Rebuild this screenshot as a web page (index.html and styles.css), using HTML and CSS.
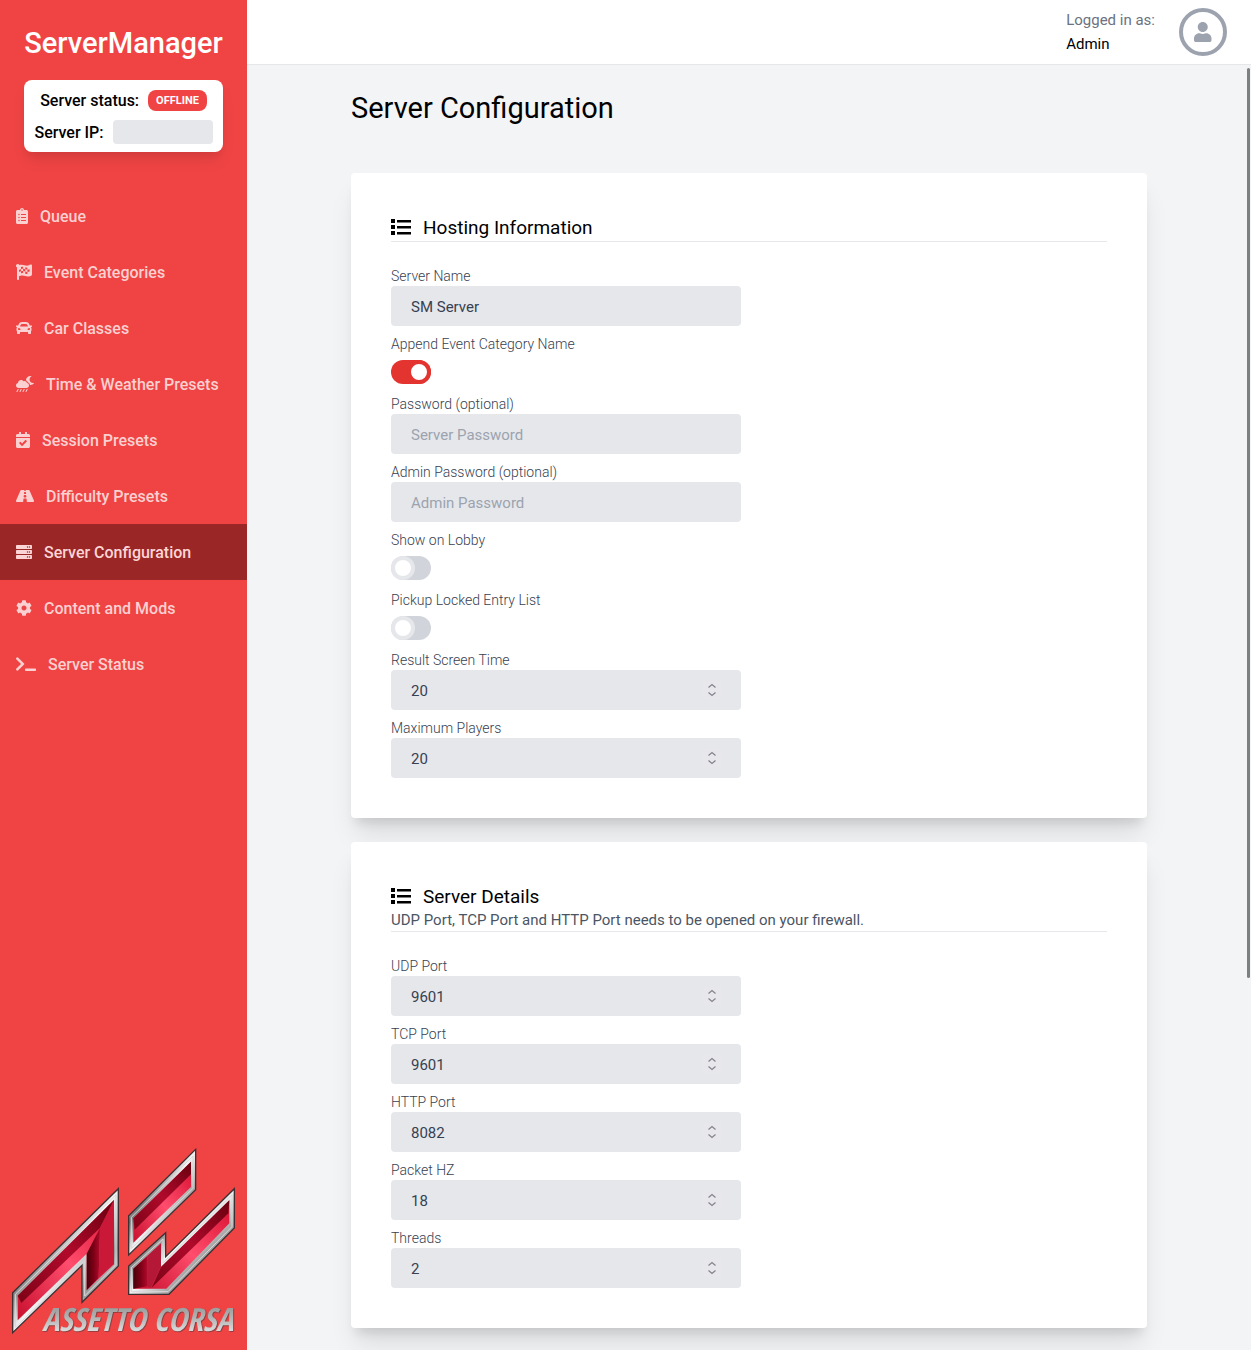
FILE: index.html
```html
<!DOCTYPE html>
<html lang="en">
<head>
<meta charset="utf-8">
<title>Server Configuration - ServerManager</title>
<meta name="viewport" content="width=device-width, initial-scale=1">
<link rel="stylesheet" href="styles.css">
</head>
<body>
<div class="app">
  <aside class="sidebar">
    <div class="brand">
      <div class="brand-name">ServerManager</div>
      <div class="status-card">
        <div class="status-row"><span class="status-label">Server status:</span><span class="badge">OFFLINE</span></div>
        <div class="status-row"><span class="status-label">Server IP:</span><span class="ip-placeholder"></span></div>
      </div>
    </div>
    <nav class="nav">
      <a class="nav-link" href="#"><svg class="icon" viewBox="0 0 384 512"><path d="M336 64h-80c0-35.300-28.700-64-64-64s-64 28.700-64 64H48C21.500 64 0 85.500 0 112v352c0 26.500 21.500 48 48 48h288c26.500 0 48-21.500 48-48V112c0-26.500-21.500-48-48-48zM96 424c-13.300 0-24-10.700-24-24s10.700-24 24-24 24 10.700 24 24-10.700 24-24 24zm0-96c-13.300 0-24-10.700-24-24s10.700-24 24-24 24 10.700 24 24-10.700 24-24 24zm0-96c-13.300 0-24-10.700-24-24s10.700-24 24-24 24 10.700 24 24-10.700 24-24 24zm96-192c13.300 0 24 10.700 24 24s-10.700 24-24 24-24-10.700-24-24 10.700-24 24-24zm128 368c0 4.400-3.600 8-8 8H168c-4.400 0-8-3.600-8-8v-16c0-4.400 3.600-8 8-8h144c4.400 0 8 3.600 8 8v16zm0-96c0 4.400-3.600 8-8 8H168c-4.400 0-8-3.600-8-8v-16c0-4.400 3.600-8 8-8h144c4.400 0 8 3.600 8 8v16zm0-96c0 4.400-3.600 8-8 8H168c-4.400 0-8-3.600-8-8v-16c0-4.400 3.600-8 8-8h144c4.400 0 8 3.600 8 8v16z"/></svg><span>Queue</span></a>
      <a class="nav-link" href="#"><svg class="icon" viewBox="0 0 512 512"><path fill-rule="evenodd" d="M112 56a56 56 0 1 0-80 50v382c0 13 11 24 24 24h16c13 0 24-11 24-24v-94c28-13 60-26 110-26 61 0 112 32 175 32 47 0 86-15 116-35 9-6 15-17 15-28V49c0-24-25-40-46-30-34 16-75 33-115 33-57 0-104-32-174-32-26 0-48 5-69 12 3 8 4 16 4 24zM160 96c24-8 44-12 68-11v69c-24-1-46 3-68 10zM296 101c24 8 44 14 68 15v68c-24 0-46-6-68-13zM228 154c24 2 46 10 68 17v70c-22-8-44-15-68-17zM96 188c22-9 42-18 64-24v70c-22 6-42 14-64 24zM364 184c26 0 48-7 72-16v69c-22 9-46 16-72 15zM160 234c24-7 44-11 68-10v68c-24-1-46 4-68 11zM296 241c24 7 46 12 68 11v69c-24 0-46-6-68-13z"/></svg><span>Event Categories</span></a>
      <a class="nav-link" href="#"><svg class="icon" viewBox="0 0 512 512"><path d="M499.990 176h-59.870l-16.640-41.600C406.380 91.630 365.570 64 319.500 64h-127c-46.060 0-86.880 27.630-103.990 70.400L71.870 176H12.010C4.200 176-1.530 183.340.370 190.910l6 24C7.700 220.250 12.500 224 18.010 224h20.070C24.650 235.730 16 252.780 16 272v48c0 16.120 6.160 30.670 16 41.930V416c0 17.670 14.330 32 32 32h32c17.670 0 32-14.330 32-32v-32h256v32c0 17.670 14.330 32 32 32h32c17.670 0 32-14.330 32-32v-54.070c9.840-11.250 16-25.800 16-41.930v-48c0-19.220-8.650-36.270-22.070-48H494c5.510 0 10.310-3.750 11.640-9.090l6-24c1.890-7.570-3.840-14.910-11.650-14.910zm-352.060-17.830c7.290-18.220 24.940-30.170 44.570-30.170h127c19.630 0 37.280 11.950 44.570 30.170L384 208H128l19.930-49.830zM96 319.800c-19.200 0-32-12.760-32-31.900S76.800 256 96 256s48 28.710 48 47.850-28.800 15.950-48 15.950zm320 0c-19.200 0-48 3.190-48-15.950S396.800 256 416 256s32 12.760 32 31.900-12.800 31.900-32 31.900z"/></svg><span>Car Classes</span></a>
      <a class="nav-link" href="#"><svg class="icon" viewBox="0 0 576 512"><path d="M350.500 225.500c-6.900-37.200-39.300-65.500-78.500-65.500-12.300 0-23.900 3-34.300 8-17.400-24.100-45.600-40-77.700-40-53 0-96 43-96 96 0 .5.200 1.100.2 1.600C27.600 232.900 0 265.200 0 304c0 44.200 35.800 80 80 80h256c44.200 0 80-35.800 80-80 0-39.200-28.200-71.700-65.500-78.500zm217.400-1.700c-70.400 13.300-135-40.300-135-110.800 0-40.600 21.900-78 57.500-98.100 5.500-3.100 4.100-11.400-2.100-12.500C479.600.8 470.700 0 461.800 0c-77.900 0-141.100 61.200-144.400 137.900 26.700 11.900 48.200 33.800 58.900 61.700 37.100 14.300 64 47.400 70.200 86.800 5.100.5 10 1.500 15.200 1.500 44.700 0 85.600-20.200 112.600-53.300 4.200-4.800-.2-12-6.400-10.800zM364.500 418.100c-7.600-4.300-17.400-1.800-21.800 6l-36.600 64c-4.400 7.700-1.700 17.400 6 21.800 2.500 1.400 5.200 2.100 7.900 2.100 5.500 0 10.900-2.900 13.900-8.100l36.600-64c4.300-7.700 1.700-17.400-6-21.800zm-96 0c-7.600-4.300-17.400-1.800-21.800 6l-36.600 64c-4.400 7.700-1.700 17.400 6 21.800 2.500 1.400 5.200 2.100 7.900 2.100 5.500 0 10.900-2.900 13.900-8.100l36.600-64c4.300-7.700 1.700-17.400-6-21.800zm-96 0c-7.600-4.300-17.400-1.800-21.800 6l-36.600 64c-4.400 7.700-1.700 17.400 6 21.800 2.500 1.400 5.200 2.100 7.900 2.100 5.500 0 10.900-2.900 13.900-8.100l36.600-64c4.300-7.700 1.700-17.400-6-21.800zm-96 0c-7.600-4.300-17.400-1.800-21.800 6l-36.600 64c-4.400 7.700-1.700 17.400 6 21.800 2.500 1.400 5.200 2.100 7.900 2.100 5.500 0 10.900-2.900 13.900-8.100l36.600-64c4.300-7.700 1.700-17.400-6-21.800z"/></svg><span>Time &amp; Weather Presets</span></a>
      <a class="nav-link" href="#"><svg class="icon" viewBox="0 0 448 512"><path d="M436 160H12c-6.627 0-12-5.373-12-12v-36c0-26.510 21.490-48 48-48h48V12c0-6.627 5.373-12 12-12h40c6.627 0 12 5.373 12 12v52h128V12c0-6.627 5.373-12 12-12h40c6.627 0 12 5.373 12 12v52h48c26.510 0 48 21.490 48 48v36c0 6.627-5.373 12-12 12zM12 192h424c6.627 0 12 5.373 12 12v260c0 26.510-21.490 48-48 48H48c-26.510 0-48-21.490-48-48V204c0-6.627 5.373-12 12-12zm333.296 95.947l-28.169-28.398c-4.667-4.705-12.265-4.736-16.970-.068L194.120 364.665l-45.980-46.352c-4.667-4.705-12.266-4.736-16.971-.068l-28.397 28.170c-4.705 4.667-4.736 12.265-.068 16.970l82.601 83.269c4.667 4.705 12.265 4.736 16.970.068l142.953-141.805c4.705-4.667 4.736-12.265.068-16.970z"/></svg><span>Session Presets</span></a>
      <a class="nav-link" href="#"><svg class="icon" viewBox="0 0 576 512"><path d="M573.190 402.670l-139.790-320C428.430 71.290 417.600 64 405.680 64h-97.590l2.450 23.160c.5 4.720-3.210 8.840-7.960 8.840h-29.160c-4.750 0-8.460-4.120-7.960-8.840L267.910 64h-97.590c-11.930 0-22.760 7.290-27.730 18.670L2.800 402.670C-6.450 423.860 8.310 448 30.540 448h196.840l10.310-97.680c.860-8.140 7.720-14.320 15.910-14.320h68.800c8.190 0 15.050 6.180 15.910 14.320L348.620 448h196.840c22.230 0 36.990-24.140 27.730-45.330zM260.400 135.160a8 8 0 0 1 7.960-7.160h39.290c4.090 0 7.530 3.090 7.960 7.160l4.600 43.580c.750 7.090-4.810 13.260-11.930 13.260h-40.540c-7.130 0-12.680-6.170-11.930-13.260l4.590-43.580zM315.640 304h-55.290c-9.500 0-16.910-8.230-15.910-17.680l5.070-48c.860-8.140 7.720-14.320 15.910-14.320h45.150c8.190 0 15.050 6.180 15.910 14.320l5.070 48c1 9.450-6.410 17.680-15.910 17.680z"/></svg><span>Difficulty Presets</span></a>
      <a class="nav-link active" href="#" aria-current="page"><svg class="icon" viewBox="0 0 512 512"><path d="M480 160H32c-17.673 0-32-14.327-32-32V64c0-17.673 14.327-32 32-32h448c17.673 0 32 14.327 32 32v64c0 17.673-14.327 32-32 32zm-48-88c-13.255 0-24 10.745-24 24s10.745 24 24 24 24-10.745 24-24-10.745-24-24-24zm-64 0c-13.255 0-24 10.745-24 24s10.745 24 24 24 24-10.745 24-24-10.745-24-24-24zm112 248H32c-17.673 0-32-14.327-32-32v-64c0-17.673 14.327-32 32-32h448c17.673 0 32 14.327 32 32v64c0 17.673-14.327 32-32 32zm-48-88c-13.255 0-24 10.745-24 24s10.745 24 24 24 24-10.745 24-24-10.745-24-24-24zm-64 0c-13.255 0-24 10.745-24 24s10.745 24 24 24 24-10.745 24-24-10.745-24-24-24zm112 248H32c-17.673 0-32-14.327-32-32v-64c0-17.673 14.327-32 32-32h448c17.673 0 32 14.327 32 32v64c0 17.673-14.327 32-32 32zm-48-88c-13.255 0-24 10.745-24 24s10.745 24 24 24 24-10.745 24-24-10.745-24-24-24zm-64 0c-13.255 0-24 10.745-24 24s10.745 24 24 24 24-10.745 24-24-10.745-24-24-24z"/></svg><span>Server Configuration</span></a>
      <a class="nav-link" href="#"><svg class="icon" viewBox="0 0 512 512"><path d="M487.400 315.700l-42.600-24.600c4.300-23.200 4.300-47 0-70.200l42.600-24.600c4.900-2.800 7.100-8.600 5.500-14-11.100-35.600-30-67.800-54.700-94.600-3.800-4.100-10-5.100-14.800-2.300L380.800 110c-17.900-15.400-38.500-27.300-60.800-35.100V25.800c0-5.600-3.900-10.500-9.400-11.700-36.700-8.200-74.300-7.800-109.200 0-5.500 1.200-9.400 6.100-9.400 11.700V75c-22.200 7.900-42.800 19.800-60.800 35.100L88.700 85.500c-4.900-2.800-11-1.900-14.800 2.300-24.700 26.700-43.600 58.900-54.700 94.600-1.700 5.400.6 11.200 5.500 14L67.300 221c-4.300 23.200-4.300 47 0 70.200l-42.600 24.600c-4.900 2.800-7.100 8.600-5.500 14 11.100 35.600 30 67.800 54.700 94.600 3.800 4.100 10 5.100 14.800 2.300l42.600-24.600c17.900 15.400 38.500 27.300 60.800 35.100v49.200c0 5.600 3.900 10.500 9.400 11.700 36.700 8.200 74.300 7.800 109.200 0 5.500-1.200 9.400-6.100 9.400-11.700v-49.200c22.200-7.900 42.800-19.800 60.800-35.100l42.600 24.600c4.900 2.800 11 1.900 14.800-2.300 24.700-26.700 43.600-58.900 54.700-94.600 1.500-5.500-.7-11.300-5.600-14.100zM256 336c-44.100 0-80-35.900-80-80s35.900-80 80-80 80 35.900 80 80-35.900 80-80 80z"/></svg><span>Content and Mods</span></a>
      <a class="nav-link" href="#"><svg class="icon" viewBox="0 0 640 512"><path d="M257.981 272.971L63.638 467.314c-9.373 9.373-24.569 9.373-33.941 0L7.029 444.647c-9.357-9.357-9.375-24.522-.040-33.901L161.011 256 6.990 101.255c-9.335-9.379-9.317-24.544.040-33.901l22.667-22.667c9.373-9.373 24.569-9.373 33.941 0L257.981 239.030c9.373 9.372 9.373 24.568 0 33.941zM640 456v-32c0-13.255-10.745-24-24-24H312c-13.255 0-24 10.745-24 24v32c0 13.255 10.745 24 24 24h304c13.255 0 24-10.745 24-24z"/></svg><span>Server Status</span></a>
    </nav>
    <svg class="logo" viewBox="36 24 672 558" role="img" aria-label="Assetto Corsa">
      <defs>
        <linearGradient id="chrome" x1="0" y1="0" x2="1" y2="1">
          <stop offset="0" stop-color="#8d8d8d"/><stop offset=".2" stop-color="#e2e2e2"/><stop offset=".35" stop-color="#777"/><stop offset=".5" stop-color="#f4f4f4"/><stop offset=".7" stop-color="#999"/><stop offset=".85" stop-color="#e6e6e6"/><stop offset="1" stop-color="#666"/>
        </linearGradient>
        <linearGradient id="light" x1="0" y1="1" x2="1" y2="0">
          <stop offset="0" stop-color="#c8102e"/><stop offset=".5" stop-color="#ff4d6d"/><stop offset="1" stop-color="#d80f30"/>
        </linearGradient>
        <linearGradient id="dark" x1="0" y1="1" x2="1" y2="0">
          <stop offset="0" stop-color="#7c0316"/><stop offset=".5" stop-color="#b00a2b"/><stop offset="1" stop-color="#68000f"/>
        </linearGradient>
        <linearGradient id="shade" x1="0" y1="0" x2="1" y2="0">
          <stop offset="0" stop-color="#4a000c"/><stop offset=".5" stop-color="#7a0015"/><stop offset="1" stop-color="#b00a2b"/>
        </linearGradient>
        <linearGradient id="steel" x1="0" y1="0" x2="0" y2="1">
          <stop offset="0" stop-color="#858585"/><stop offset=".5" stop-color="#b5b5b5"/><stop offset="1" stop-color="#f6f6f6"/>
        </linearGradient>
      </defs>
      <g stroke="#3d3033" stroke-width="4" fill="url(#chrome)">
        <path d="M38 458 355 146v232L246 487V376L38 578Z"/>
        <path d="M587 28v121L386 345V227Z"/>
        <path d="M703 146v118L507 463H386v-85l111-100v72Z"/>
      </g>
      <g fill="none" stroke="#d8d8d8" stroke-width="3">
        <path d="M46 463 348 164v210L254 468V362L46 562Z"/>
        <path d="M579 48v97L394 326V232Z"/>
        <path d="M696 164v96L504 455H394v-72l95-86v72Z"/>
      </g>
      <g>
        <path fill="url(#light)" d="M53 467 342 180v192L260 451V341L53 541Z"/>
        <path fill="url(#dark)" d="M53 467 342 180 300 264 64 489Z"/>
        <path fill="url(#shade)" d="M300 264 296 414 260 451V341Z"/>
        <path fill="#c91838" d="M342 180v192l-46 42 4-150Z"/>
        <path fill="url(#light)" d="M573 65v76L400 308v-73Z"/>
        <path fill="url(#dark)" d="M573 65v38L404 269l-4-34Z"/>
        <path fill="url(#light)" d="M688 181v69L499 446H400v-60l83-76v71Z"/>
        <path fill="url(#dark)" d="M688 181 685 220 455 443 483 381Z"/>
        <path fill="url(#shade)" d="M400 386l42-38v91l-42 7Z"/>
        <path fill="#b51736" d="M442 348l41-38v71l-31 62-10-4Z"/>
      </g>
      <text class="logo-text" x="126" y="573" fill="url(#steel)">ASSETTO CORSA</text>
    </svg>
  </aside>

  <div class="content">
    <header class="topbar">
      <div class="user">
        <span class="user-label">Logged in as:</span>
        <span class="user-name">Admin</span>
      </div>
      <button class="avatar" type="button" aria-label="Account">
        <svg viewBox="0 0 448 512"><path d="M224 256c70.700 0 128-57.300 128-128S294.700 0 224 0 96 57.300 96 128s57.300 128 128 128zm89.600 32h-16.700c-22.200 10.200-46.900 16-72.900 16s-50.600-5.800-72.900-16h-16.700C60.200 288 0 348.200 0 422.400V464c0 26.500 21.500 48 48 48h352c26.500 0 48-21.500 48-48v-41.600c0-74.200-60.200-134.400-134.400-134.400z"/></svg>
      </button>
    </header>
    <main class="main">
      <h1 class="page-title">Server Configuration</h1>
      <form class="cards">
        <section class="card">
          <header class="card-head">
            <h2 class="card-title"><svg class="list-icon" viewBox="0 0 20 18"><path d="M0 1h4v4H0zM6 2h14v2.400H6zM0 7h4v4H0zM6 8h14v2.400H6zM0 13h4v4H0zM6 14h14v2.400H6z"/></svg><span>Hosting Information</span></h2>
          </header>
          <div class="fields">
            <div class="field"><label for="name">Server Name</label><input class="input" id="name" type="text" value="SM Server"></div>
            <div class="field"><label for="append">Append Event Category Name</label><input class="toggle" id="append" type="checkbox" checked></div>
            <div class="field"><label for="password">Password (optional)</label><input class="input" id="password" type="text" placeholder="Server Password"></div>
            <div class="field"><label for="admin">Admin Password (optional)</label><input class="input" id="admin" type="text" placeholder="Admin Password"></div>
            <div class="field"><label for="lobby">Show on Lobby</label><input class="toggle" id="lobby" type="checkbox"></div>
            <div class="field"><label for="pickup">Pickup Locked Entry List</label><input class="toggle" id="pickup" type="checkbox"></div>
            <div class="field"><label for="result">Result Screen Time</label><input class="input number" id="result" type="number" value="20"></div>
            <div class="field"><label for="players">Maximum Players</label><input class="input number" id="players" type="number" value="20"></div>
          </div>
        </section>
        <section class="card">
          <header class="card-head">
            <h2 class="card-title"><svg class="list-icon" viewBox="0 0 20 18"><path d="M0 1h4v4H0zM6 2h14v2.400H6zM0 7h4v4H0zM6 8h14v2.400H6zM0 13h4v4H0zM6 14h14v2.400H6z"/></svg><span>Server Details</span></h2>
            <p class="card-note">UDP Port, TCP Port and HTTP Port needs to be opened on your firewall.</p>
          </header>
          <div class="fields">
            <div class="field"><label for="udp">UDP Port</label><input class="input number" id="udp" type="number" value="9601"></div>
            <div class="field"><label for="tcp">TCP Port</label><input class="input number" id="tcp" type="number" value="9601"></div>
            <div class="field"><label for="http">HTTP Port</label><input class="input number" id="http" type="number" value="8082"></div>
            <div class="field"><label for="hz">Packet HZ</label><input class="input number" id="hz" type="number" value="18"></div>
            <div class="field"><label for="threads">Threads</label><input class="input number" id="threads" type="number" value="2"></div>
          </div>
        </section>
      </form>
    </main>
    <div class="scroll-thumb"></div>
  </div>
</div>
</body>
</html>
```
FILE: styles.css
```css
*, *::before, *::after { box-sizing: border-box; }

body {
  margin: 0;
  font-family: Roboto, "Liberation Sans", sans-serif;
  font-size: 15px;
  font-weight: 400;
  line-height: 24px;
  color: #000;
}

h1, h2, p { margin: 0; font-weight: inherit; }

.app { display: flex; height: 100vh; background: #f3f4f6; }

/* Sidebar */
.sidebar {
  display: flex;
  flex-direction: column;
  flex: none;
  width: 247px;
  background: #f04444;
}

.brand { padding: 24px 24px 36px; }

.brand-name {
  margin-bottom: 18px;
  color: #fff;
  font-size: 29px;
  font-weight: 500;
  line-height: 38px;
  text-align: center;
  white-space: nowrap;
}

.status-card {
  display: grid;
  gap: 8px;
  padding: 8px;
  border-radius: 8px;
  background: #fff;
  box-shadow: 0 10px 15px -3px rgba(0, 0, 0, .1), 0 4px 6px -2px rgba(0, 0, 0, .05);
}

.status-row {
  display: flex;
  align-items: center;
  justify-content: center;
  gap: 9px;
  height: 24px;
  font-size: 16px;
  font-weight: 500;
  white-space: nowrap;
}

.status-label { padding-top: 2px; }

.badge {
  padding: 1px 8px 0;
  border-radius: 8px;
  background: #f04444;
  color: #fff;
  font-size: 11px;
  font-weight: 700;
  line-height: 20px;
}

.ip-placeholder { width: 100px; height: 24px; border-radius: 4px; background: #e5e7eb; }

.nav { display: flex; flex-direction: column; }

.nav-link {
  display: flex;
  align-items: center;
  gap: 12px;
  height: 56px;
  padding: 0 16px;
  color: #fbd0d0;
  font-size: 16px;
  font-weight: 500;
  text-decoration: none;
  white-space: nowrap;
}

.nav-link span { padding-top: 2px; }

.nav-link.active { background: #9b2626; color: #fbd5d5; }

.icon { flex: none; height: 16px; fill: currentColor; }

.logo { display: block; width: 224px; margin: auto 12px 16px; overflow: visible; }

.logo-text {
  font-family: "Open Sans Condensed", "Noto Sans Condensed", "Roboto Condensed", sans-serif;
  font-size: 96px;
  font-style: italic;
  font-weight: 700;
  filter: drop-shadow(2px 2px 0 #6d3a3c);
}

/* Content column */
.content {
  position: relative;
  display: flex;
  flex: 1;
  flex-direction: column;
  min-width: 0;
}

.topbar {
  display: flex;
  flex: none;
  align-items: center;
  justify-content: flex-end;
  gap: 24px;
  padding: 8px 24px;
  border-bottom: 1px solid #e5e7eb;
  background: #fff;
}

.user { display: flex; flex-direction: column; }
.user-label { color: #6b7280; }

.avatar {
  display: grid;
  place-items: center;
  width: 48px;
  height: 48px;
  padding: 0;
  border: 4px solid #9ca3af;
  border-radius: 50%;
  background: #fff;
}

.avatar svg { height: 20px; fill: #9ca3af; }

.main {
  flex: 1;
  min-height: 0;
  overflow-y: auto;
  padding: 24px 104px;
  scrollbar-width: none;
}

.scroll-thumb {
  position: absolute;
  top: 68px;
  right: 1px;
  width: 3px;
  height: 910px;
  border-radius: 2px;
  background: #7c8080;
}

.page-title { margin-bottom: 46px; font-size: 29px; line-height: 38px; }

.cards { display: grid; gap: 24px; }

.card {
  padding: 40px;
  border-radius: 4px;
  background: #fff;
  box-shadow: 0 20px 25px -5px rgba(0, 0, 0, .1), 0 10px 10px -5px rgba(0, 0, 0, .1);
}

.card-head { margin-bottom: 24px; border-bottom: 1px solid #e5e7eb; }

.card-title {
  display: flex;
  align-items: center;
  gap: 12px;
  font-size: 19px;
  line-height: 26px;
}

.card-title span { padding-top: 2px; }

.list-icon { flex: none; width: 20px; height: 18px; }

.card-note { color: #4b5563; line-height: 21px; }

.fields { display: grid; gap: 8px; }

.field {
  display: flex;
  flex-direction: column;
  max-width: 350px;
}

.field label { color: #374151; font-size: 14px; font-weight: 300; line-height: 20px; }

.input {
  width: 100%;
  height: 40px;
  padding: 2px 20px 0;
  border: 0;
  border-radius: 4px;
  outline: 0;
  background: #e5e7eb;
  color: #374151;
  font: inherit;
}

.input::placeholder { color: #9ca3af; opacity: 1; }

.number {
  appearance: textfield;
  background: #e5e7eb url("data:image/svg+xml,%3Csvg xmlns='http://www.w3.org/2000/svg' viewBox='0 0 18 18' fill='none' stroke='%23858590' stroke-width='1.300'%3E%3Crect width='18' height='18' fill='%23e8e7eb' stroke='none'/%3E%3Cpath d='M5.500 6.500 9 3.500l3.500 3M5.500 11.500 9 14.500l3.500-3'/%3E%3C/svg%3E") no-repeat right 20px center / 18px 18px;
}

.toggle {
  appearance: none;
  display: grid;
  align-items: center;
  width: 40px;
  height: 24px;
  margin: 6px 0 2px;
  border-radius: 12px;
  background: #d1d5db;
}

.toggle::before {
  content: "";
  width: 24px;
  height: 24px;
  border: 4px solid #e5e7eb;
  border-radius: 50%;
  background: #fff;
}

.toggle:checked { background: #e3342f; }
.toggle:checked::before { margin-left: 16px; border-color: #e3342f; }
```
